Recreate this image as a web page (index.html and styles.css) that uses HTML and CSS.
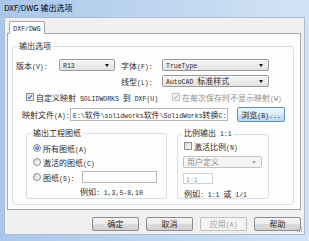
FILE: index.html
```html
<!DOCTYPE html>
<html lang="zh-CN">
<head>
    <meta charset="UTF-8">
    <title>DXF/DWG 输出选项</title>
    <link rel="stylesheet" href="styles.css">
</head>
<body>
<div class="window">
    <div class="titlebar">DXF/DWG 输出选项</div>

    <div class="client">
        <div class="tabs">
            <div class="tab"><span class="m">DXF/DWG</span></div>
        </div>

        <div class="pane">
            <fieldset class="group outer">
                <legend>输出选项</legend>

                <div class="row row-combo first">
                    <span class="lbl lbl-ver">版本<span class="m">(V):</span></span>
                    <div class="combo combo-ver"><span class="m">R13</span><i class="arrow"></i></div>
                    <span class="lbl lbl-font">字体<span class="m">(F):</span></span>
                    <div class="combo combo-wide"><span class="m">TrueType</span><i class="arrow"></i></div>
                </div>

                <div class="row row-combo second">
                    <span class="lbl lbl-font lbl-line">线型<span class="m">(L):</span></span>
                    <div class="combo combo-wide"><span class="m">AutoCAD </span>标准样式<i class="arrow"></i></div>
                </div>

                <div class="row row-check">
                    <div class="opt opt-map">
                        <span class="check on"><svg viewBox="0 0 8 8"><path d="M1.6 4.2 L3.3 6 L6.6 1.6"/></svg></span>
                        <span>自定义映射<span class="m"> SOLIDWORKS </span>到<span class="m"> DXF(U)</span></span>
                    </div>
                    <div class="opt dim">
                        <span class="check on off"><svg viewBox="0 0 8 8"><path d="M1.6 4.2 L3.3 6 L6.6 1.6"/></svg></span>
                        <span>在每次保存时不显示映射<span class="m">(W)</span></span>
                    </div>
                </div>

                <div class="row row-file">
                    <span class="lbl lbl-file">映射文件<span class="m">(A):</span></span>
                    <div class="field field-file"><span class="m">E:\</span>软件<span class="m">\solidworks</span>软件<span class="m">\SolidWorks</span>转换<span class="m">C:</span></div>
                    <div class="btn btn-browse">浏览<span class="m">(B)...</span></div>
                </div>

                <div class="row row-groups">
                    <fieldset class="group sheets">
                        <legend>输出工程图纸</legend>
                        <div class="opt sub first-radio">
                            <span class="radio on"></span>
                            <span>所有图纸<span class="m">(A)</span></span>
                        </div>
                        <div class="opt sub">
                            <span class="radio"></span>
                            <span>激活的图纸<span class="m">(C)</span></span>
                        </div>
                        <div class="opt sub sheet-pick">
                            <span class="radio"></span>
                            <span class="pick-lbl">图纸<span class="m">(S):</span></span>
                            <div class="field field-sheets"></div>
                        </div>
                        <div class="hint hint-sheets">例如<span class="m">: 1,3,5-8,10</span></div>
                    </fieldset>

                    <fieldset class="group scale">
                        <legend>比例输出<span class="m"> 1:1</span></legend>
                        <div class="opt sub scale-check">
                            <span class="check"></span>
                            <span>激活比例<span class="m">(N)</span></span>
                        </div>
                        <div class="combo combo-scale dim">用户定义<i class="arrow"></i></div>
                        <div class="field field-scale dim"><span class="m">1:1</span></div>
                        <div class="hint hint-scale">例如<span class="m">: 1:1 </span>或<span class="m"> 1/1</span></div>
                    </fieldset>
                </div>
            </fieldset>
        </div>

        <div class="buttons">
            <div class="btn">确定</div>
            <div class="btn">取消</div>
            <div class="btn disabled">应用<span class="m">(A)</span></div>
            <div class="btn">帮助</div>
        </div>

        <svg class="grip" viewBox="0 0 6 6">
            <rect x="4" y="0" width="1" height="1"/>
            <rect x="2" y="2" width="1" height="1"/>
            <rect x="4" y="2" width="1" height="1"/>
            <rect x="0" y="4" width="1" height="1"/>
            <rect x="2" y="4" width="1" height="1"/>
            <rect x="4" y="4" width="1" height="1"/>
        </svg>
    </div>
</div>
</body>
</html>
```

FILE: styles.css
```css
* {
    box-sizing: border-box;
}

body {
    margin: 0;
    width: 309px;
    height: 241px;
    overflow: hidden;
    font-family: "Noto Sans CJK SC", sans-serif;
    font-size: 8px;
    color: #2a2a2a;
    background: #b0cbe9;
}

.m {
    font-family: "Liberation Mono", monospace;
    font-size: 6.5px;
}

.window {
    width: 309px;
    height: 241px;
    padding: 0 4px 6px;
    display: flex;
    flex-direction: column;
    background: linear-gradient(90deg, #aac7ea 0%, #bcd4ef 45%, #d2e3f5 100%);
}

.titlebar {
    height: 17px;
    line-height: 16px;
    font-size: 8px;
    color: #000;
    white-space: nowrap;
}

.client {
    position: relative;
    flex: 1;
    display: flex;
    flex-direction: column;
    padding: 3px 3px 0 2px;
    background: #f0f0f0;
    border: 1px solid #a9bcd3;
}

/* tab strip */
.tabs {
    display: flex;
    height: 13px;
    padding-left: 2px;
    margin-bottom: -1px;
}

.tab {
    position: relative;
    z-index: 1;
    width: 36px;
    height: 13px;
    line-height: 12px;
    text-align: center;
    background: #fff;
    border: 1px solid #a3a6ad;
    border-bottom: none;
    border-radius: 2px 2px 0 0;
}

.pane {
    width: 294px;
    height: 177px;
    padding: 7px 0 0 4px;
    background: #fdfdfd;
    border: 1px solid #a3a6ad;
}

/* group boxes */
.group {
    margin: 0;
    padding: 0;
    min-width: 0;
    border: 1px solid #d5dfe5;
    border-radius: 3px;
}

.group legend {
    padding: 0 2px;
    margin-left: 4px;
    line-height: 10px;
    white-space: nowrap;
}

.outer {
    width: 282px;
    padding-bottom: 5px;
}

.row {
    display: flex;
    align-items: center;
}

.lbl {
    white-space: nowrap;
}

.row-combo {
    height: 12px;
}

.row-combo.first {
    margin-top: 8px;
}

.row-combo.second {
    margin-top: 4px;
}

.lbl-ver {
    margin-left: 3px;
    width: 43px;
}

.lbl-font {
    margin-left: 6px;
    width: 41px;
}

.lbl-line {
    margin-left: 108px;
}

.combo {
    position: relative;
    height: 12px;
    line-height: 10px;
    padding-left: 3px;
    white-space: nowrap;
    border: 1px solid #9b9b9b;
    border-radius: 2px;
    background: linear-gradient(#f8f8f8, #ececec 50%, #e3e3e3);
}

.combo-ver {
    width: 56px;
}

.combo-wide {
    width: 107px;
}

.arrow {
    position: absolute;
    right: 5px;
    top: 4px;
    width: 0;
    height: 0;
    border-left: 2.5px solid transparent;
    border-right: 2.5px solid transparent;
    border-top: 3px solid #111;
}

.dim {
    color: #8d8d8d;
}

.combo.dim {
    border-color: #c3c3c3;
    background: #f4f4f4;
}

.combo.dim .arrow {
    border-top-color: #a8a8a8;
}

/* check boxes and radios */
.opt {
    display: flex;
    align-items: center;
    height: 10px;
    white-space: nowrap;
}

.check,
.radio {
    flex: none;
    width: 8px;
    height: 8px;
    margin-right: 2px;
    border: 1px solid #8f8f8f;
    background: linear-gradient(135deg, #dadada, #f9f9f9);
}

.check svg {
    display: block;
    width: 6px;
    height: 6px;
}

.check path {
    fill: none;
    stroke: #2f5fa8;
    stroke-width: 1.4;
}

.check.off {
    border-color: #c2c2c2;
    background: #f4f4f4;
}

.check.off path {
    stroke: #a9a9a9;
}

.radio {
    border-radius: 50%;
    display: flex;
    align-items: center;
    justify-content: center;
}

.radio.on::after {
    content: "";
    width: 4px;
    height: 4px;
    border-radius: 50%;
    background: radial-gradient(circle at 35% 35%, #a9cdf5, #2a64c4 70%);
}

.row-check {
    margin-top: 5px;
    height: 10px;
}

.opt-map {
    margin-left: 13px;
    width: 146px;
}

/* mapping file */
.row-file {
    margin-top: 5px;
    height: 15px;
}

.lbl-file {
    margin-left: 9px;
    width: 48px;
}

.field {
    height: 13px;
    line-height: 11px;
    padding-left: 2px;
    overflow: hidden;
    white-space: nowrap;
    background: #fff;
    border: 1px solid #b4b6bb;
}

.field-file {
    width: 158px;
}

.btn {
    width: 47px;
    height: 14px;
    line-height: 12px;
    text-align: center;
    white-space: nowrap;
    border: 1px solid #8c8c8c;
    border-radius: 2px;
    background: linear-gradient(#f4f4f4, #ebebeb 50%, #dcdcdc 51%, #d2d2d2);
}

.btn-browse {
    margin-left: 9px;
    width: 48px;
    height: 15px;
    line-height: 13px;
    border-color: #5b8fc0;
    background: linear-gradient(#eef6fc, #dcecf8 50%, #c8e1f4 51%, #bcd9f0);
}

.btn.disabled {
    color: #9a9a9a;
    border-color: #bfc2c5;
    background: #f4f4f4;
}

/* lower group boxes */
.row-groups {
    margin-top: 6px;
    align-items: flex-start;
}

.sheets {
    margin-left: 13px;
    width: 141px;
    height: 71px;
}

.scale {
    margin-left: 10px;
    width: 92px;
    height: 71px;
}

.sub {
    margin-left: 6px;
    margin-top: 4px;
}

.first-radio {
    margin-top: 5px;
}

.sheet-pick {
    height: 12px;
}

.pick-lbl {
    width: 39px;
}

.field-sheets {
    width: 75px;
    height: 12px;
}

.hint {
    height: 10px;
    line-height: 10px;
    white-space: nowrap;
}

.hint-sheets {
    margin: 4px 0 0 53px;
}

.scale-check {
    margin-top: 1px;
}

.combo-scale {
    margin: 5px 0 0 5px;
    width: 79px;
}

.field-scale {
    margin: 5px 0 0 5px;
    width: 30px;
    height: 11px;
    line-height: 9px;
    border-color: #cfd1d4;
}

.hint-scale {
    margin: 5px 0 0 6px;
}

/* dialog buttons */
.buttons {
    display: flex;
    justify-content: flex-end;
    gap: 7px;
    margin-top: 7px;
}

.grip {
    position: absolute;
    right: 1px;
    bottom: 1px;
    width: 6px;
    height: 6px;
    fill: #a7a7a7;
}
```
